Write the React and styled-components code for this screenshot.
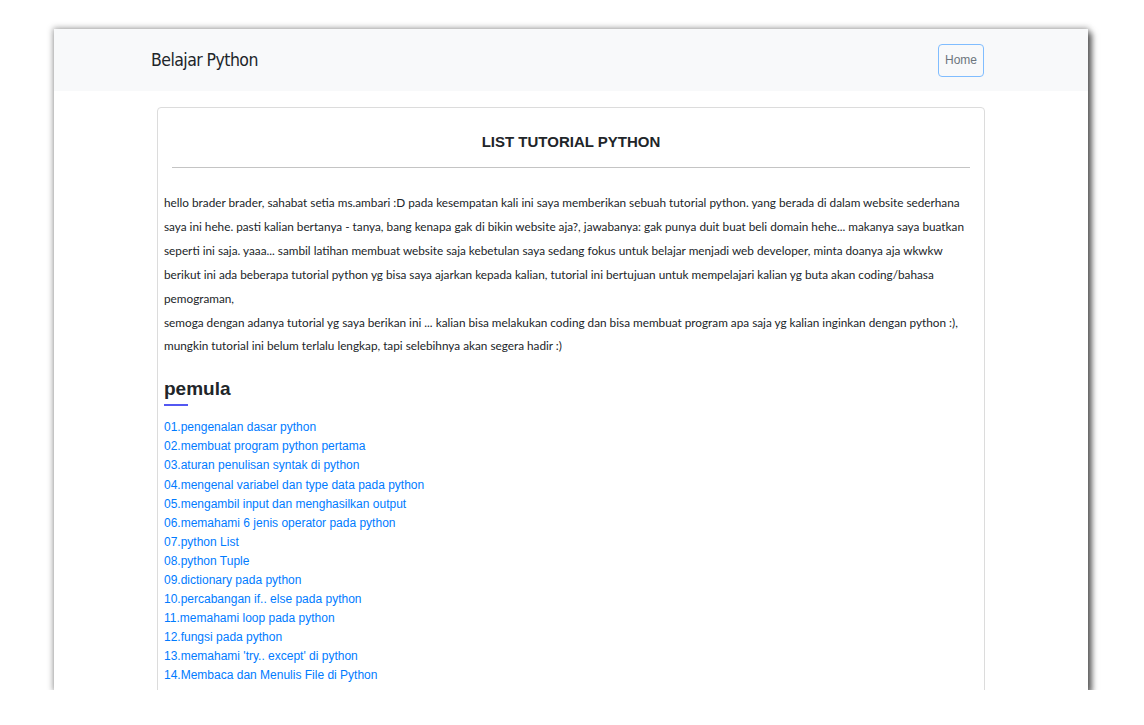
import React from "react";
import styled, { createGlobalStyle } from "styled-components";

const Global = createGlobalStyle`
  html, body { margin: 0; padding: 0; background: #ffffff; }
  body { font-family: "Liberation Sans", Arial, sans-serif; color: #212529; }
`;

const Page = styled.div`
  padding: 29px 0 0 54px;
`;

const Frame = styled.div`
  width: 1034px;
  height: 661px;
  overflow: hidden;
  background: #ffffff;
  box-shadow: 4px 4px 6px rgba(0, 0, 0, 0.55), 0 0 6px 1px rgba(0, 0, 0, 0.35);
`;

const NavBar = styled.nav`
  background: #f8f9fa;
  height: 62px;
  display: flex;
  align-items: center;
`;

const NavInner = styled.div`
  width: 840px;
  margin: 0 auto;
  display: flex;
  align-items: center;
  justify-content: space-between;
  padding-right: 7px;
  box-sizing: border-box;
`;

const Brand = styled.a`
  font-family: "DejaVu Sans Condensed", sans-serif;
  font-size: 17.5px;
  letter-spacing: -0.55px;
  color: #212529;
  text-decoration: none;
`;

const HomeButton = styled.button`
  font-family: "Liberation Sans", Arial, sans-serif;
  font-size: 12px;
  color: #6c757d;
  background: transparent;
  border: 1px solid #80bdff;
  border-radius: 4px;
  height: 33px;
  padding: 0 6px;
`;

const Card = styled.section`
  width: 828px;
  margin: 16px auto 0;
  border: 1px solid #dcdcdc;
  border-radius: 4px;
  box-sizing: border-box;
  padding: 25px 6px 20px;
`;

const Title = styled.h5`
  margin: 0;
  text-align: center;
  font-family: "Liberation Sans", Arial, sans-serif;
  font-weight: 700;
  font-size: 15px;
  line-height: 18px;
  color: #212529;
`;

const Rule = styled.hr`
  margin: 16px 8px 23px;
  border: 0;
  border-top: 1px solid #c4c4c4;
`;

const Intro = styled.p`
  margin: 0;
  font-family: "Lato", sans-serif;
  font-size: 11.78px;
  line-height: 23.9px;
  color: #212529;
`;

const SectionTitle = styled.h3`
  margin: 20px 0 0;
  font-family: "Liberation Sans", Arial, sans-serif;
  font-weight: 700;
  font-size: 19px;
  line-height: 22px;
  color: #212529;
`;

const Underline = styled.div`
  width: 24px;
  height: 2px;
  background: #5358f2;
  margin-top: 4px;
`;

const LinkList = styled.ul`
  list-style: none;
  margin: 12px 0 0;
  padding: 0;
`;

const LinkItem = styled.li`
  font-family: "Liberation Sans", Arial, sans-serif;
  font-size: 12px;
  line-height: 19.07px;
`;

const Link = styled.a`
  color: #007bff;
  text-decoration: none;
`;

const tutorials = [
  "01.pengenalan dasar python",
  "02.membuat program python pertama",
  "03.aturan penulisan syntak di python",
  "04.mengenal variabel dan type data pada python",
  "05.mengambil input dan menghasilkan output",
  "06.memahami 6 jenis operator pada python",
  "07.python List",
  "08.python Tuple",
  "09.dictionary pada python",
  "10.percabangan if.. else pada python",
  "11.memahami loop pada python",
  "12.fungsi pada python",
  "13.memahami 'try.. except' di python",
  "14.Membaca dan Menulis File di Python",
];

export default function App() {
  return (
    <>
      <Global />
      <Page>
        <Frame>
          <NavBar>
            <NavInner>
              <Brand href="#">Belajar Python</Brand>
              <HomeButton>Home</HomeButton>
            </NavInner>
          </NavBar>
          <Card>
            <Title>LIST TUTORIAL PYTHON</Title>
            <Rule />
            <Intro>
              hello brader brader, sahabat setia ms.ambari :D pada kesempatan kali ini saya memberikan sebuah tutorial python. yang berada di dalam website sederhana
              <br />
              saya ini hehe. pasti kalian bertanya - tanya, bang kenapa gak di bikin website aja?, jawabanya: gak punya duit buat beli domain hehe... makanya saya buatkan
              <br />
              seperti ini saja. yaaa... sambil latihan membuat website saja kebetulan saya sedang fokus untuk belajar menjadi web developer, minta doanya aja wkwkw
              <br />
              berikut ini ada beberapa tutorial python yg bisa saya ajarkan kepada kalian, tutorial ini bertujuan untuk mempelajari kalian yg buta akan coding/bahasa
              <br />
              pemograman,
              <br />
              semoga dengan adanya tutorial yg saya berikan ini ... kalian bisa melakukan coding dan bisa membuat program apa saja yg kalian inginkan dengan python :),
              <br />
              mungkin tutorial ini belum terlalu lengkap, tapi selebihnya akan segera hadir :)
            </Intro>
            <SectionTitle>pemula</SectionTitle>
            <Underline />
            <LinkList>
              {tutorials.map((t) => (
                <LinkItem key={t}>
                  <Link href="#">{t}</Link>
                </LinkItem>
              ))}
            </LinkList>
          </Card>
        </Frame>
      </Page>
    </>
  );
}
